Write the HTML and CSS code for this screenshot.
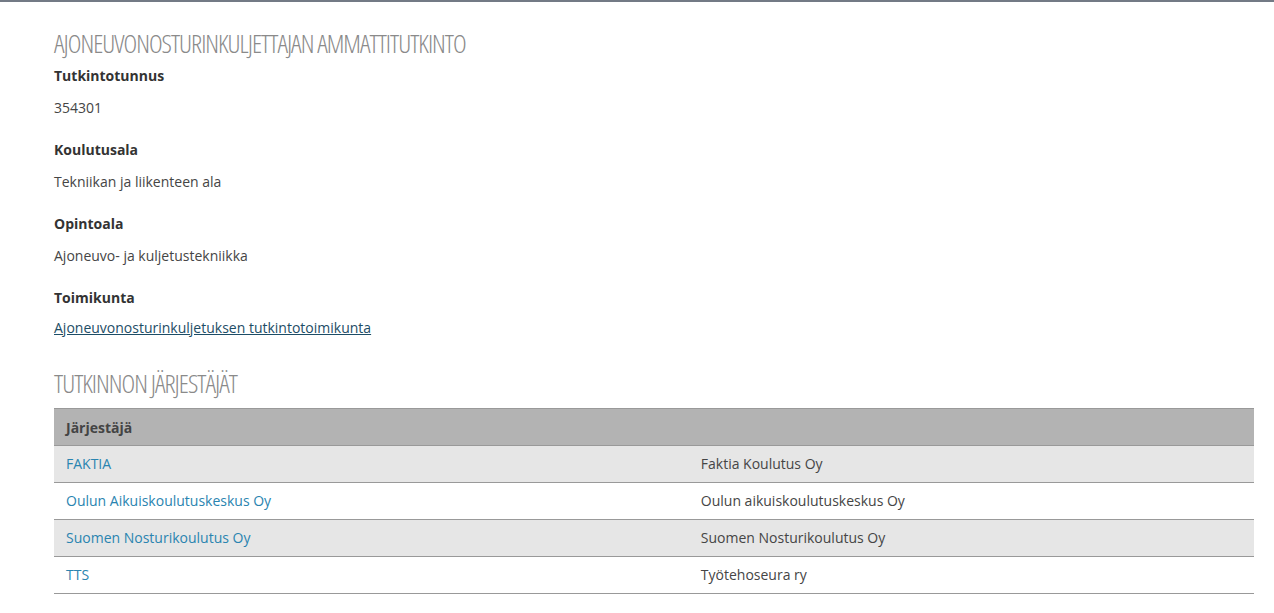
FILE: index.html
```html
<!DOCTYPE html>
<html lang="fi">
<head>
<meta charset="utf-8">
<link rel="stylesheet" href="styles.css">
</head>
<body>
<div class="topbar"></div>
<main class="content">
  <h1 class="title">Ajoneuvonosturinkuljettajan ammattitutkinto</h1>
  <dl class="facts">
    <dt>Tutkintotunnus</dt>
    <dd>354301</dd>
    <dt>Koulutusala</dt>
    <dd>Tekniikan ja liikenteen ala</dd>
    <dt>Opintoala</dt>
    <dd>Ajoneuvo- ja kuljetustekniikka</dd>
    <dt>Toimikunta</dt>
    <dd class="last"><a class="plain-link" href="#">Ajoneuvonosturinkuljetuksen tutkintotoimikunta</a></dd>
  </dl>
  <h2 class="title title-2">Tutkinnon järjestäjät</h2>
  <table class="orgs">
    <thead>
      <tr><th class="col1">Järjestäjä</th><th></th></tr>
    </thead>
    <tbody>
      <tr><td><a href="#">FAKTIA</a></td><td>Faktia Koulutus Oy</td></tr>
      <tr><td><a href="#">Oulun Aikuiskoulutuskeskus Oy</a></td><td>Oulun aikuiskoulutuskeskus Oy</td></tr>
      <tr><td><a href="#">Suomen Nosturikoulutus Oy</a></td><td>Suomen Nosturikoulutus Oy</td></tr>
      <tr><td><a href="#">TTS</a></td><td>Työtehoseura ry</td></tr>
    </tbody>
  </table>
</main>
</body>
</html>
```

FILE: styles.css
```css
html, body {
  margin: 0;
  padding: 0;
  background: #fff;
}
body {
  font-family: "Open Sans", "Liberation Sans", sans-serif;
  font-size: 14px;
  color: #454545;
}
.topbar {
  height: 2px;
  background: #737a85;
}
.content {
  padding: 0 20px 0 54px;
}
.title {
  margin: 0;
  padding-top: 26px;
  font-family: "Open Sans", sans-serif;
  font-weight: 300;
  font-stretch: 75%;
  font-size: 26px;
  line-height: 30px;
  text-transform: uppercase;
  color: #8a8a8a;
  letter-spacing: -1px;
}
.title-2 {
  padding-top: 0;
  margin-top: 30px;
  margin-bottom: 10px;
}
.facts {
  margin: 0;
  padding-top: 8px;
}
.facts dt {
  font-weight: 700;
  color: #333;
  line-height: 20px;
}
.facts dd {
  margin: 12px 0 22px 0;
  line-height: 20px;
}
.facts dd.last {
  margin-top: 10px;
  margin-bottom: 0;
}
.plain-link {
  color: #1d4d66;
  text-decoration: underline;
}
.orgs {
  width: 100%;
  border-collapse: collapse;
}
.orgs th {
  background: #b3b3b3;
  text-align: left;
  font-weight: 700;
  color: #444;
  height: 36px;
  padding: 0 12px;
  border-top: 1px solid #999;
  border-bottom: 1px solid #999;
}
.orgs .col1 {
  width: 52.9%;
}
.orgs td {
  height: 37px;
  padding: 0 12px 2px 12px;
  box-sizing: border-box;
  border-bottom: 1px solid #999;
}
.orgs tbody tr:nth-child(odd) td {
  background: #e6e6e6;
}
.orgs td a {
  color: #2a84b0;
  text-decoration: none;
}
```
